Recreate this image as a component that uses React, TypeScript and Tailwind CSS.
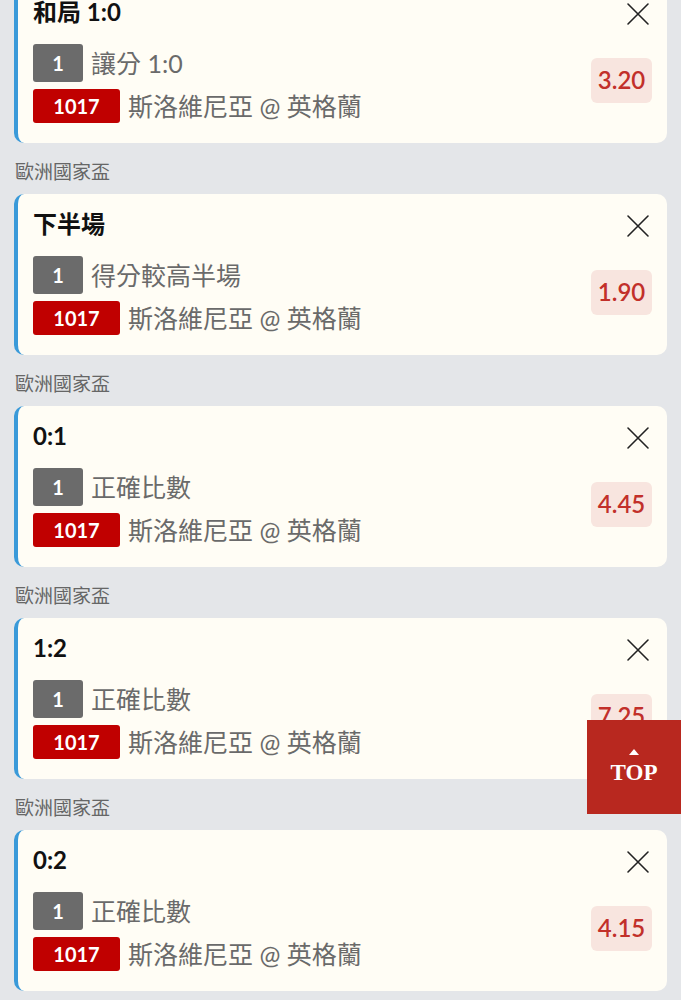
import React from "react";

const bets = [
  { title: "和局 1:0", market: "讓分 1:0", odds: "3.20" },
  { title: "下半場", market: "得分較高半場", odds: "1.90" },
  { title: "0:1", market: "正確比數", odds: "4.45" },
  { title: "1:2", market: "正確比數", odds: "7.25" },
  { title: "0:2", market: "正確比數", odds: "4.15" },
];

const CloseIcon = () => (
  <svg width="24" height="24" viewBox="0 0 24 24" fill="none" stroke="#222" strokeWidth="1.6" strokeLinecap="round">
    <path d="M2 2 L22 22 M22 2 L2 22" />
  </svg>
);

const BetCard = ({ title, market, odds }: { title: string; market: string; odds: string }) => (
  <div className="mx-[14px] rounded-[10px] border-l-4 border-[#3a9ad9] bg-[#fffdf5] pl-[15px] pr-[15px] pt-[16px] pb-[20px]">
    <div className="flex items-center justify-between">
      <div className="text-[24px] font-bold leading-[28px] text-[#111]">{title}</div>
      <div className="mr-[2px] mt-[3px]">
        <CloseIcon />
      </div>
    </div>
    <div className="mt-[18px] flex items-center justify-between">
      <div className="flex flex-col gap-[7px]">
        <div className="flex items-center gap-[8px]">
          <div className="flex h-[38px] w-[50px] items-center justify-center rounded-[3px] bg-[#6b6b6b] text-[20px] font-bold text-white">
            1
          </div>
          <div className="text-[25px] leading-[30px] text-[#6a6a6a]">{market}</div>
        </div>
        <div className="flex items-center gap-[8px]">
          <div className="flex h-[34px] w-[87px] items-center justify-center rounded-[3px] bg-[#c00000] text-[20px] font-bold text-white">
            1017
          </div>
          <div className="text-[25px] leading-[30px] text-[#6a6a6a]">斯洛維尼亞 @ 英格蘭</div>
        </div>
      </div>
      <div className="mb-[7px] flex h-[45px] w-[61px] items-center justify-center rounded-[6px] bg-[#f8e5df] text-[24px] font-semibold text-[#c2302a]">
        {odds}
      </div>
    </div>
  </div>
);

export default function App() {
  return (
    <div
      className="relative min-h-screen overflow-hidden bg-[#e4e6e9]"
      style={{ fontFamily: 'Lato, "Noto Sans CJK TC", sans-serif' }}
    >
      <div className="mt-[-18px]">
        {bets.map((b, i) => (
          <div key={i}>
            {i > 0 && (
              <div className="px-[15px] pt-[19px] pb-[12px] text-[19px] leading-[20px] text-[#666]">歐洲國家盃</div>
            )}
            <BetCard {...b} />
          </div>
        ))}
      </div>
      <div className="absolute left-[587px] top-[720px] flex h-[94px] w-[94px] flex-col items-center justify-center bg-[#b8281f] text-white">
        <div className="h-0 w-0 border-x-[5px] border-b-[6px] border-x-transparent border-b-white" />
        <div className="mt-[6px] text-[23px] font-bold leading-[24px]" style={{ fontFamily: '"Liberation Serif", serif' }}>
          TOP
        </div>
      </div>
    </div>
  );
}
